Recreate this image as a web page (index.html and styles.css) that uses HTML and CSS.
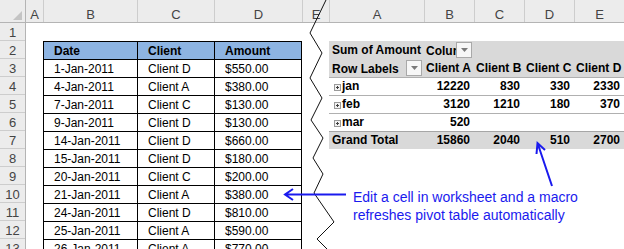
FILE: index.html
```html
<!DOCTYPE html>
<html lang="en">
<head>
    <meta charset="UTF-8">
    <title>Refresh pivot table automatically</title>
    <link rel="stylesheet" href="styles.css">
</head>
<body>
<div class="screen">
    <!-- Source data sheet -->
    <div class="sheet left">
        <div class="row head">
            <div class="rh corner">
                <svg width="25" height="22"><path d="M22 11V20H13Z" fill="#c4c4c4"/></svg>
            </div>
            <div class="cell ca">A</div>
            <div class="cell cb">B</div>
            <div class="cell cc">C</div>
            <div class="cell cd">D</div>
            <div class="cell ce">E</div>
        </div>
        <div class="row"><div class="rh">1</div><div class="cell ca"></div><div class="cell cb"></div><div class="cell cc"></div><div class="cell cd"></div><div class="cell ce"></div></div>
        <div class="row"><div class="rh">2</div><div class="cell ca"></div><div class="cell cb t th">Date</div><div class="cell cc t th">Client</div><div class="cell cd t th">Amount</div><div class="cell ce"></div></div>
        <div class="row"><div class="rh">3</div><div class="cell ca"></div><div class="cell cb t">1-Jan-2011</div><div class="cell cc t">Client D</div><div class="cell cd t">$550.00</div><div class="cell ce"></div></div>
        <div class="row"><div class="rh">4</div><div class="cell ca"></div><div class="cell cb t">4-Jan-2011</div><div class="cell cc t">Client A</div><div class="cell cd t">$380.00</div><div class="cell ce"></div></div>
        <div class="row"><div class="rh">5</div><div class="cell ca"></div><div class="cell cb t">7-Jan-2011</div><div class="cell cc t">Client C</div><div class="cell cd t">$130.00</div><div class="cell ce"></div></div>
        <div class="row"><div class="rh">6</div><div class="cell ca"></div><div class="cell cb t">9-Jan-2011</div><div class="cell cc t">Client D</div><div class="cell cd t">$130.00</div><div class="cell ce"></div></div>
        <div class="row"><div class="rh">7</div><div class="cell ca"></div><div class="cell cb t">14-Jan-2011</div><div class="cell cc t">Client D</div><div class="cell cd t">$660.00</div><div class="cell ce"></div></div>
        <div class="row"><div class="rh">8</div><div class="cell ca"></div><div class="cell cb t">15-Jan-2011</div><div class="cell cc t">Client D</div><div class="cell cd t">$180.00</div><div class="cell ce"></div></div>
        <div class="row"><div class="rh">9</div><div class="cell ca"></div><div class="cell cb t">20-Jan-2011</div><div class="cell cc t">Client C</div><div class="cell cd t">$200.00</div><div class="cell ce"></div></div>
        <div class="row"><div class="rh">10</div><div class="cell ca"></div><div class="cell cb t">21-Jan-2011</div><div class="cell cc t">Client A</div><div class="cell cd t">$380.00</div><div class="cell ce"></div></div>
        <div class="row"><div class="rh">11</div><div class="cell ca"></div><div class="cell cb t">24-Jan-2011</div><div class="cell cc t">Client D</div><div class="cell cd t">$810.00</div><div class="cell ce"></div></div>
        <div class="row"><div class="rh">12</div><div class="cell ca"></div><div class="cell cb t">25-Jan-2011</div><div class="cell cc t">Client A</div><div class="cell cd t">$590.00</div><div class="cell ce"></div></div>
        <div class="row"><div class="rh">13</div><div class="cell ca"></div><div class="cell cb t">26-Jan-2011</div><div class="cell cc t">Client A</div><div class="cell cd t">$770.00</div><div class="cell ce"></div></div>
    </div>

    <!-- Pivot table sheet -->
    <div class="sheet right">
        <div class="row head">
            <div class="cell pa">A</div>
            <div class="cell pb">B</div>
            <div class="cell pc">C</div>
            <div class="cell pd">D</div>
            <div class="cell pe">E</div>
        </div>
        <div class="row"></div>
        <div class="row pv">
            <div class="cell pa">Sum of Amount</div>
            <div class="cell pb drop">
                <span class="clip">Column Labels</span>
                <span class="btn"><svg width="7" height="4"><path d="M0 0H7L3.5 4Z" fill="#7a7a7a"/></svg></span>
            </div>
            <div class="cell pc"></div><div class="cell pd"></div><div class="cell pe"></div>
        </div>
        <div class="row pv">
            <div class="cell pa drop">
                <span class="clip">Row Labels</span>
                <span class="btn"><svg width="7" height="4"><path d="M0 0H7L3.5 4Z" fill="#7a7a7a"/></svg></span>
            </div>
            <div class="cell pb">Client A</div>
            <div class="cell pc">Client B</div>
            <div class="cell pd">Client C</div>
            <div class="cell pe">Client D</div>
        </div>
        <div class="row item">
            <div class="cell pa"><svg class="plus" width="7" height="7"><rect x="0.5" y="0.5" width="6" height="6" fill="#f2f2f2" stroke="#9a9a9a"/><path d="M2 3.5H5M3.5 2V5" stroke="#404040"/></svg>jan</div>
            <div class="cell pb num">12220</div><div class="cell pc num">830</div><div class="cell pd num">330</div><div class="cell pe num">2330</div>
        </div>
        <div class="row item">
            <div class="cell pa"><svg class="plus" width="7" height="7"><rect x="0.5" y="0.5" width="6" height="6" fill="#f2f2f2" stroke="#9a9a9a"/><path d="M2 3.5H5M3.5 2V5" stroke="#404040"/></svg>feb</div>
            <div class="cell pb num">3120</div><div class="cell pc num">1210</div><div class="cell pd num">180</div><div class="cell pe num">370</div>
        </div>
        <div class="row item">
            <div class="cell pa"><svg class="plus" width="7" height="7"><rect x="0.5" y="0.5" width="6" height="6" fill="#f2f2f2" stroke="#9a9a9a"/><path d="M2 3.5H5M3.5 2V5" stroke="#404040"/></svg>mar</div>
            <div class="cell pb num">520</div><div class="cell pc num"></div><div class="cell pd num"></div><div class="cell pe num"></div>
        </div>
        <div class="row total">
            <div class="cell pa">Grand Total</div>
            <div class="cell pb num">15860</div><div class="cell pc num">2040</div><div class="cell pd num">510</div><div class="cell pe num">2700</div>
        </div>
    </div>

    <!-- Torn edge and arrows drawn over both sheets -->
    <svg class="marks" width="624" height="249">
        <polyline class="zig" points="326,0 310,33 322,53 310,78 322,98 311,120 323,138 313,158 323,174 314,193 334,222 317,239 327,249"/>
        <path class="arrow" d="M346 194.5H285M293 189L285 194.5L293 200"/>
        <path class="arrow" d="M552 186L537.5 143M536.5 154L537.5 143L545 150"/>
    </svg>

    <div class="note">Edit a cell in worksheet and a macro<br>refreshes pivot table automatically</div>
</div>
</body>
</html>
```

FILE: styles.css
```css
* {
    box-sizing: border-box;
}

body {
    margin: 0;
    font-family: 'Liberation Sans', Arial, sans-serif;
    font-size: 12px;
    color: #000;
    background: #fff;
}

.screen {
    position: relative;
    display: flex;
    width: 624px;
    height: 249px;
    overflow: hidden;
}

.sheet {
    display: flex;
    flex-direction: column;
    flex: none;
}

.sheet.left {
    width: 329px;
}

.sheet.right {
    width: 295px;
}

.row {
    display: flex;
    flex: none;
    height: 18px;
    line-height: 17px;
}

.cell {
    flex: none;
    height: 100%;
    padding-top: 1px;
    white-space: nowrap;
    overflow: hidden;
}

/* Column and row headers */
.row.head {
    height: 23px;
    background: #ececec;
    border-bottom: 1px solid #b4b4b4;
    color: #444;
    font-size: 13px;
}

.head .cell {
    border-left: 1px solid #cdcdcd;
    text-align: center;
    line-height: 22px;
    padding-top: 4px;
}

.rh {
    flex: none;
    width: 25px;
    height: 100%;
    padding-top: 1px;
    background: #ececec;
    border-bottom: 1px solid #cdcdcd;
    color: #444;
    font-size: 13px;
    text-align: center;
    line-height: 18px;
}

.rh.corner {
    padding-top: 0;
    border-bottom: none;
}

.rh.corner svg {
    display: block;
}

.ca { width: 18px; }
.cb { width: 94px; }
.cc { width: 77px; }
.cd { width: 88px; }
.ce { width: 27px; }

.row .ca {
    border-left: 1px solid #b4b4b4;
}

/* Source data table */
.t {
    border-left: 1px solid #000;
    border-top: 1px solid #000;
    padding-left: 10px;
}

.cd.t {
    border-right: 1px solid #000;
}

.th {
    background: #8db4e2;
    font-weight: bold;
}

/* Pivot table */
.pa { width: 95px; }
.pb { width: 50px; }
.pc { width: 50px; }
.pd { width: 50px; }
.pe { width: 50px; }

.pv, .item, .total {
    font-weight: bold;
}

.pv {
    background: #d9d9d9;
}

.pv .cell {
    padding-left: 2px;
}

.pv .pa {
    padding-left: 3px;
}

.drop {
    display: flex;
    align-items: center;
    padding-right: 2px;
}

.pv .drop {
    padding-top: 0;
}

.drop .clip {
    flex: 1;
    overflow: hidden;
    padding-top: 2px;
}

.btn {
    flex: none;
    display: flex;
    align-items: center;
    justify-content: center;
    width: 16px;
    height: 16px;
    background: #f7f7f7;
    border: 1px solid #a9a9a9;
}

.btn svg {
    display: block;
}

.item {
    border-top: 1px solid #b0b0b0;
}

.item .cell {
    padding-top: 0;
}

.item .pa {
    padding-left: 5px;
}

.plus {
    margin-right: 1px;
    vertical-align: -0.5px;
}

.total {
    background: #d9d9d9;
    border-top: 1px solid #a6a6a6;
}

.total .cell {
    padding-top: 0;
}

.total .pa {
    padding-left: 3px;
}

.num {
    text-align: right;
    padding-right: 4px;
}

/* Annotations */
.marks {
    position: absolute;
    top: 0;
    left: 0;
    pointer-events: none;
}

.zig {
    fill: none;
    stroke: #111;
    stroke-width: 1;
}

.arrow {
    fill: none;
    stroke: #1a1aee;
    stroke-width: 2;
}

.note {
    position: absolute;
    left: 353px;
    top: 188px;
    color: #1a1aee;
    font-size: 14px;
    line-height: 18px;
    white-space: nowrap;
}
```
